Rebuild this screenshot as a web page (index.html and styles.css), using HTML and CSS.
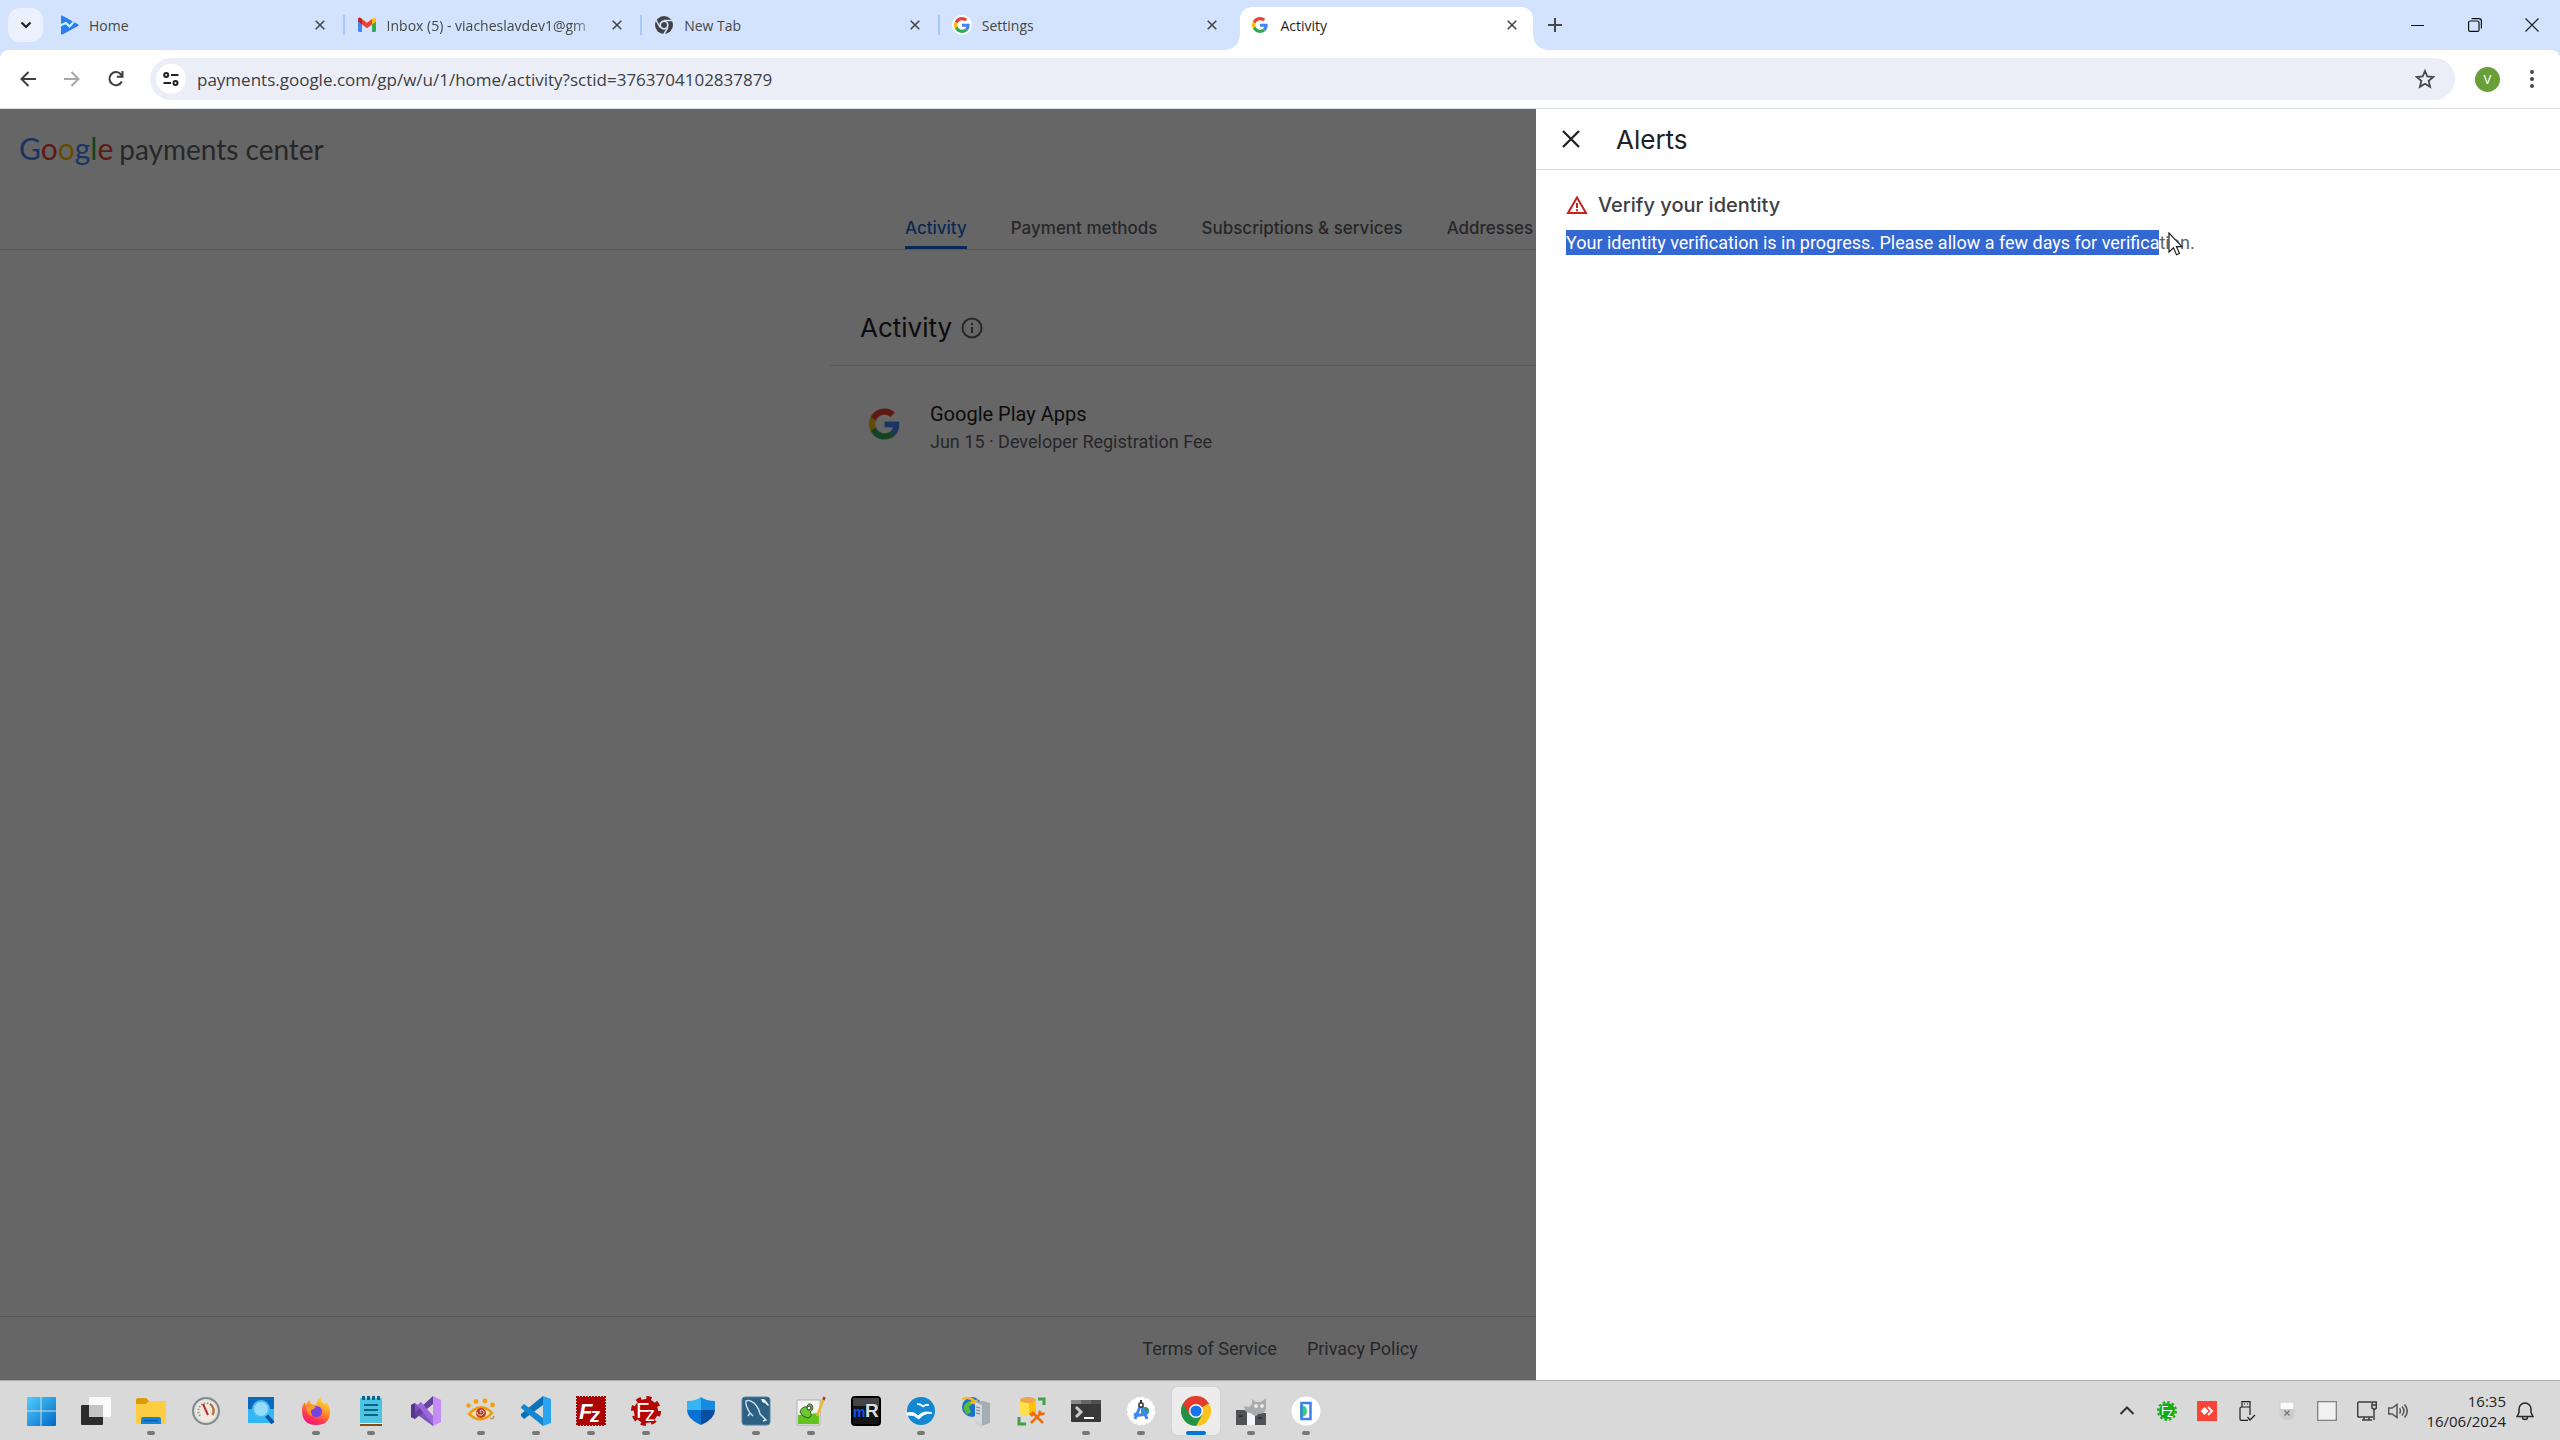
FILE: index.html
```html
<!DOCTYPE html>
<html lang="en">
<head>
    <meta charset="utf-8">
    <title>Activity</title>
    <link rel="stylesheet" href="styles.css">
</head>
<body>
    <!-- shared icons -->
    <svg class="sprite" aria-hidden="true">
        <symbol id="google" viewBox="0 0 48 48">
            <path fill="#ea4335" d="M24 9.500c3.540 0 6.710 1.220 9.210 3.600l6.850-6.850C35.900 2.380 30.470 0 24 0 14.620 0 6.510 5.380 2.560 13.220l7.980 6.190C12.430 13.720 17.740 9.500 24 9.500z"/>
            <path fill="#4285f4" d="M46.980 24.550c0-1.570-.15-3.090-.38-4.550H24v9.020h12.940c-.58 2.960-2.260 5.480-4.780 7.180l7.730 6c4.510-4.180 7.090-10.360 7.090-17.650z"/>
            <path fill="#fbbc05" d="M10.530 28.590c-.48-1.450-.76-2.990-.76-4.590s.27-3.140.76-4.590l-7.980-6.190C.92 16.460 0 20.120 0 24c0 3.880.92 7.540 2.560 10.780l7.970-6.190z"/>
            <path fill="#34a853" d="M24 48c6.480 0 11.930-2.130 15.890-5.810l-7.730-6c-2.150 1.450-4.920 2.300-8.160 2.300-6.260 0-11.570-4.220-13.470-9.910l-7.980 6.190C6.510 42.620 14.620 48 24 48z"/>
        </symbol>
        <symbol id="close" viewBox="0 0 10 10">
            <path d="M.7.7l8.600 8.600M9.300.7L.7 9.300" fill="none" stroke="currentColor" stroke-width="1.600"/>
        </symbol>
    </svg>

    <header class="tab-strip">
        <button class="tab-search" aria-label="Search tabs">
            <svg width="12" height="8" viewBox="0 0 12 8"><path d="M1.500 1.500L6 6l4.500-4.500" fill="none" stroke="#1f1f1f" stroke-width="2.200"/></svg>
        </button>
        <div class="tabs">
            <div class="tab">
                <svg class="favicon" viewBox="0 0 20 20"><path d="M2 1.500Q2 0 3.500.7L19 9.200q1.500.8 0 1.700L4 19.300Q2 20 2 18.500z" fill="#2b7df3"/><path d="M1 10.500l6-2.500 3.500 3.500L14.500 7" fill="none" stroke="#c8f7fb" stroke-width="2.200"/></svg>
                <a href="#">Home</a>
                <button aria-label="Close Home"><svg><use href="#close"/></svg></button>
            </div>
            <div class="tab">
                <svg class="favicon" viewBox="0 0 20 20"><path fill="#4285f4" d="M1 6l4 3v8H2.500Q1 17 1 15.500z"/><path fill="#34a853" d="M15 9l4-3v9.500q0 1.500-1.500 1.500H15z"/><path fill="#fbbc04" d="M15 4l1.500-1Q19 2 19 4.500V6.500L15 9.500z"/><path fill="#c5221f" d="M1 4.500q0-3 3-1.500l1 1v5.500L1 6.500z"/><path fill="#ea4335" d="M5 4l5 3.700L15 4v5.500l-5 3.700-5-3.700z"/></svg>
                <a href="#" class="fade">Inbox (5) - viacheslavdev1@gm</a>
                <button aria-label="Close Inbox"><svg><use href="#close"/></svg></button>
            </div>
            <div class="tab">
                <svg class="favicon" viewBox="0 0 20 20"><circle cx="10" cy="10" r="9" fill="#3f4347"/><path d="M10 5.500h8.500M6.100 12.300L2 5M13.900 12.300L9.700 19.500" stroke="#d3e3fd" stroke-width="1.500"/><circle cx="10" cy="10" r="3.800" fill="#3f4347" stroke="#d3e3fd" stroke-width="1.700"/></svg>
                <a href="#">New Tab</a>
                <button aria-label="Close New Tab"><svg><use href="#close"/></svg></button>
            </div>
            <div class="tab">
                <svg class="favicon" viewBox="0 0 20 20"><circle cx="10" cy="10" r="10" fill="#fff"/><use href="#google" x="2" y="2" width="16" height="16"/></svg>
                <a href="#">Settings</a>
                <button aria-label="Close Settings"><svg><use href="#close"/></svg></button>
            </div>
            <div class="tab active">
                <svg class="favicon" viewBox="0 0 20 20"><use href="#google" x="2" y="2" width="16" height="16"/></svg>
                <a href="#">Activity</a>
                <button aria-label="Close Activity"><svg><use href="#close"/></svg></button>
            </div>
        </div>
        <button class="new-tab" aria-label="New tab">
            <svg width="14" height="14" viewBox="0 0 14 14"><path d="M7 0v14M0 7h14" stroke="#474747" stroke-width="2"/></svg>
        </button>
        <div class="window-buttons">
            <button aria-label="Minimize"><svg width="14" height="14" viewBox="0 0 14 14"><path d="M0 7.500h13" stroke="#111"/></svg></button>
            <button aria-label="Restore"><svg width="14" height="14" viewBox="0 0 14 14" fill="none" stroke="#111" stroke-width="1.200"><rect x=".6" y="3" width="10.400" height="10.400" rx="1.500"/><path d="M3.500.6H11q2.400 0 2.400 2.400v7.500"/></svg></button>
            <button aria-label="Close window"><svg width="14" height="14" viewBox="0 0 14 14"><path d="M.5.5l13 13M13.500.5l-13 13" stroke="#222" stroke-width="1.200"/></svg></button>
        </div>
    </header>

    <div class="toolbar">
        <button class="tool" aria-label="Back"><svg width="16" height="16" viewBox="0 0 16 16"><path d="M16 8H1.500M8.500 1L1.500 8l7 7" fill="none" stroke="#3c3f42" stroke-width="2"/></svg></button>
        <button class="tool" aria-label="Forward" disabled><svg width="16" height="16" viewBox="0 0 16 16"><path d="M0 8h14.500M7.500 1l7 7-7 7" fill="none" stroke="#a5a6a8" stroke-width="2"/></svg></button>
        <button class="tool" aria-label="Reload"><svg width="16" height="16" viewBox="0 0 16 16"><path d="M13.800 10.500A6.500 6.500 0 1 1 13 3.500L14.500 5.500M14.500 0v5.800H8.800" fill="none" stroke="#3c3f42" stroke-width="2"/></svg></button>
        <div class="omnibox">
            <button class="site-info" aria-label="Site information">
                <svg width="16" height="14" viewBox="0 0 16 14" fill="none" stroke="#202124" stroke-width="2"><circle cx="3.200" cy="3" r="2"/><path d="M8 3h7.500M.5 11H8"/><circle cx="12.500" cy="11" r="2"/></svg>
            </button>
            <input type="text" aria-label="Address" value="payments.google.com/gp/w/u/1/home/activity?sctid=3763704102837879">
            <button class="star" aria-label="Bookmark this tab">
                <svg width="20" height="20" viewBox="0 0 20 20"><path d="M10 2l2.300 5.500 6 .5-4.600 3.900 1.400 5.900L10 14.700l-5.100 3.100 1.400-5.900L1.700 8l6-.5z" fill="none" stroke="#474747" stroke-width="1.800"/></svg>
            </button>
        </div>
        <button class="avatar" aria-label="Profile">V</button>
        <button class="menu" aria-label="Menu"><svg width="4" height="18" viewBox="0 0 4 18" fill="#474747"><circle cx="2" cy="2" r="2"/><circle cx="2" cy="9" r="2"/><circle cx="2" cy="16" r="2"/></svg></button>
    </div>

    <div class="viewport">
        <div class="page">
            <div class="brand">
                <span class="logo"><span class="blue">G</span><span class="red">o</span><span class="yellow">o</span><span class="blue">g</span><span class="green">l</span><span class="red">e</span></span>
                <span>payments center</span>
            </div>
            <nav class="page-nav">
                <div class="nav-inner">
                    <a href="#" class="current">Activity</a>
                    <a href="#">Payment methods</a>
                    <a href="#">Subscriptions &amp; services</a>
                    <a href="#">Addresses</a>
                </div>
            </nav>
            <main class="content">
                <h1>Activity
                    <svg width="22" height="22" viewBox="0 0 22 22" fill="none" stroke="#5f6368" stroke-width="2"><circle cx="11" cy="11" r="9.500"/><path d="M11 10v6M11 6v2"/></svg>
                </h1>
                <div class="entry">
                    <svg class="entry-icon"><use href="#google"/></svg>
                    <div>
                        <div class="entry-name">Google Play Apps</div>
                        <div class="entry-info">Jun 15 · Developer Registration Fee</div>
                    </div>
                </div>
            </main>
            <footer class="page-footer">
                <a href="#">Terms of Service</a>
                <a href="#">Privacy Policy</a>
            </footer>
        </div>
        <div class="scrim"></div>
        <aside class="drawer">
            <div class="drawer-header">
                <button aria-label="Close alerts"><svg width="18" height="18" viewBox="0 0 18 18"><path d="M1 1l16 16M17 1L1 17" stroke="#202124" stroke-width="2.300"/></svg></button>
                <h2>Alerts</h2>
            </div>
            <div class="alert">
                <h3>
                    <svg width="22" height="20" viewBox="0 0 22 20"><path d="M11 2.500L20 18H2z" fill="none" stroke="#c5221f" stroke-width="2"/><path d="M11 8v5M11 14.200v2" stroke="#c5221f" stroke-width="2"/></svg>
                    Verify your identity
                </h3>
                <p><mark>Your identity verification is in progress. Please allow a few days for verifica</mark><span class="rest">tion.<svg class="cursor" width="15" height="24" viewBox="0 0 15 24"><path d="M1 1v19l4.500-4.200 3 7 3-1.300-3-6.800H14z" fill="#fff" stroke="#222" stroke-width="1.200"/></svg></span></p>
            </div>
        </aside>
    </div>

    <footer class="taskbar">
        <div class="apps">
            <button aria-label="Start"><svg viewBox="0 0 30 30"><defs><linearGradient id="win" x2="1" y2="1"><stop stop-color="#4fd0ff"/><stop offset="1" stop-color="#0067c5"/></linearGradient></defs><path fill="url(#win)" d="M2 1h12.500v13.500H1V2q0-1 1-1zM15.500 1H29q1 0 1 1v12.500H15.500zM1 15.500h13.500V30H2q-1 0-1-1zM15.500 15.500H30V29q0 1-1 1H15.500z"/></svg></button>
            <button aria-label="Task view"><svg viewBox="0 0 30 30"><rect x="0" y="9" width="22" height="20" rx="1" fill="#2b2b2b"/><rect x="8" y="1" width="22" height="20" rx="1" fill="#fafafa"/><path d="M8 9h14v12H8z" fill="#c3c3c3"/></svg></button>
            <button aria-label="File Explorer" class="open"><svg viewBox="0 0 30 30"><path d="M0 4q0-2 2-2h8l3 3h16q1 0 1 1v8H0z" fill="#dd9b08"/><path d="M0 8h10l3-3h16q1 0 1 1v21q0 1-1 1H1q-1 0-1-1z" fill="#ffcd42"/><path d="M5 28v-5q0-2 2-2h16q2 0 2 2v5z" fill="#1583d8"/><path d="M8 24.500h14" stroke="#0b5ca6" stroke-width="1.500"/></svg></button>
            <button aria-label="Gauge"><svg viewBox="0 0 30 30"><circle cx="15" cy="15" r="13" fill="#dedbd5" stroke="#7f8b91" stroke-width="2"/><circle cx="15" cy="15" r="10.500" fill="#eeeae2"/><path d="M9 20a8 8 0 0 1 10-12" fill="none" stroke="#99958e" stroke-width="2" stroke-dasharray="1.500 1.500"/><path d="M19 8a8 8 0 0 1 2.500 11" fill="none" stroke="#b8733b" stroke-width="2.500"/><path d="M12 8l5 11" stroke="#c62a27" stroke-width="2"/></svg></button>
            <button aria-label="Search tool"><svg viewBox="0 0 30 30"><path d="M2 1h26v26H2z" fill="#33b6f5"/><path d="M2 1h26v12H2z" fill="#0969bd"/><path d="M20 19l7 8" stroke="#0756a4" stroke-width="4"/><circle cx="15" cy="13" r="8" fill="#93dcfa" stroke="#49baf0" stroke-width="2"/></svg></button>
            <button aria-label="Firefox" class="open"><svg viewBox="0 0 30 30"><defs><linearGradient id="fox" x1=".8" y1="0" x2=".3" y2="1"><stop stop-color="#ffe83b"/><stop offset=".45" stop-color="#ff9126"/><stop offset=".75" stop-color="#ff3850"/><stop offset="1" stop-color="#ed1282"/></linearGradient></defs><path fill="url(#fox)" d="M1 14q0-5 3-8l1 3 3-5 2 4 5 1q1-6 5-8l1 5 3 2 1-2q4 5 4 10 0 13-14 13T1 14z"/><circle cx="15.500" cy="15.500" r="5.500" fill="#7542e5"/><path d="M5 11q5-3 10 0-2 3-5 3-1 3 1 6-5-1-6-9z" fill="#ff9b2d"/></svg></button>
            <button aria-label="Notepad" class="open"><svg viewBox="0 0 30 30"><path d="M4 2h22v25H4z" fill="#4cc3df"/><path d="M8 9h14M8 14h14M8 19h14" stroke="#08628c" stroke-width="2"/><path d="M7.500 0v4M12.500 0v4M17.500 0v4M22.500 0v4" stroke="#08628c" stroke-width="3"/><path d="M4 27h22v1H4z" fill="#fff"/><path d="M4 28h22v2H4z" fill="#8a4a0b"/></svg></button>
            <button aria-label="Visual Studio"><svg viewBox="0 0 30 30"><path d="M0 9l4-2 18 16v7L4 17v6l-4-2z" fill="#7c52c0"/><path d="M0 9l4-2v16l-4-2z" fill="#54358f"/><path d="M4 23l5-4 13-11V0L9 12l-5 4z" fill="#66409f"/><path d="M6 9l4-3 13 15v9z" fill="#9b66da"/><path d="M22 0l8 4v22l-8 4z" fill="#c38cf4"/></svg></button>
            <button aria-label="Image viewer" class="open"><svg viewBox="0 0 30 30"><path d="M3 18q12-13 23-1-11 12-23 1z" fill="#f6ddb2" stroke="#ef9a0c" stroke-width="2.500"/><circle cx="15" cy="17" r="5" fill="#bc3b25"/><path d="M15 17q-2-3 1-3 4 2 0 5-5 1-5-3" fill="none" stroke="#f0d8c7"/><g fill="#f5a10e"><circle cx="2.500" cy="9.500" r="2.200"/><circle cx="10" cy="5.500" r="2.400"/><circle cx="19" cy="5" r="2.400"/><circle cx="26.500" cy="9" r="2.400"/></g><path d="M24 22q3 2 4-2" fill="none" stroke="#b99455" stroke-width="1.500"/></svg></button>
            <button aria-label="Visual Studio Code" class="open"><svg viewBox="0 0 30 30"><path d="M22 0v9L3 23l-3-3v-2z" fill="#0673b8"/><path d="M0 11l3-3 19 14v8L0 12z" fill="#1287cf"/><path d="M22 0l8 3v24l-8 3z" fill="#2ba4ef"/></svg></button>
            <button aria-label="FileZilla" class="open"><svg viewBox="0 0 30 30"><rect x="1" y="1" width="28" height="28" fill="#ac0404" stroke="#ac0404" stroke-width="2" stroke-dasharray="2 1"/><text x="3" y="23" class="fz">F</text><text x="14" y="26" class="fz small">z</text></svg></button>
            <button aria-label="FileZilla Server" class="open"><svg viewBox="0 0 30 30"><circle cx="15" cy="15" r="12" fill="#b50606"/><circle cx="15" cy="15" r="13" fill="none" stroke="#b50606" stroke-width="4" stroke-dasharray="5 5.210"/><text x="5" y="22" class="fz thin">F</text><text x="14" y="25" class="fz thin small">z</text></svg></button>
            <button aria-label="Windows Security"><svg viewBox="0 0 30 30"><path d="M15 1q5 4 14 4v9H15z" fill="#148be0"/><path d="M15 1Q10 5 1 5v9h14z" fill="#35b5f2"/><path d="M1 14h14v15Q1 23 1 14z" fill="#0772d3"/><path d="M29 14H15v15q14-6 14-15z" fill="#0a4f9f"/></svg></button>
            <button aria-label="MySQL Workbench" class="open"><svg viewBox="0 0 30 30"><rect x="1" y="1" width="28" height="28" rx="3" fill="#2d6183" stroke="#58829b"/><path d="M7 20l2-3 3 3M9 17Q4 9 5 5q3-2 8 2 5 5 6 11l6 6-3 1" fill="none" stroke="#d5e3ec" stroke-width="1.400"/><path d="M20 3q1 4 4 4l3 3 1-1-3-4-2-2" fill="#edf4f8"/></svg></button>
            <button aria-label="Notepad++" class="open"><svg viewBox="0 0 30 30"><path d="M1 4h23v25H1z" fill="#f4f4f2" stroke="#999" stroke-width=".700"/><path d="M2 19l21-2v11L2 28z" fill="#63c31f"/><path d="M4 16q2-6 7-5 1-5 5-2 2 5-2 7 3 4-2 6-6-1-8-6z" fill="#69cb32" stroke="#315824"/><circle cx="13" cy="12" r="2" fill="#fff" stroke="#333"/><path d="M28 2l-7 18" stroke="#efb52b" stroke-width="2.500"/><path d="M28.500 1l-1 3" stroke="#a23f3a" stroke-width="2.500"/></svg></button>
            <button aria-label="mRemote"><svg viewBox="0 0 30 30"><rect x="1" y="1" width="28" height="28" rx="3" fill="#141414" stroke="#000" stroke-width="2"/><path d="M2 2h26v8H2z" fill="#444"/><text x="2" y="21" class="m">m</text><text x="14" y="21" class="r">R</text></svg></button>
            <button aria-label="OpenOffice" class="open"><svg viewBox="0 0 30 30"><circle cx="15" cy="15" r="14" fill="#1188d1"/><path d="M11 8q4-1 6 2 3-3 6-1-4 0-6 2-2-2-6-3zM1 17q7-2 11 3 6-6 14-3-9 0-13 6-5-5-12-4z" fill="#fff" stroke="#fff"/></svg></button>
            <button aria-label="IIS Manager"><svg viewBox="0 0 30 30"><circle cx="11" cy="11" r="10" fill="#1a70ce"/><path d="M4 8q5-5 8-1l-4 4 2 5-4 3q-5-6-2-11z" fill="#55bd36"/><path d="M1 2q9-3 13 2l3-1-1 6-8-2 3-2Q8 2 1 4z" fill="#f4b625"/><path d="M14 6l8-1 7 2v20l-9 3-6-5z" fill="#a5adb2"/><path d="M14 6l7 3v21l-7-5z" fill="#d2d8db"/><path d="M15 11l4 1M15 14l4 1M15 17l4 1" stroke="#747f86"/></svg></button>
            <button aria-label="Database tools"><svg viewBox="0 0 30 30"><path d="M4 4h16v14q-8 3-16 0z" fill="#ffe04a"/><path d="M13 6h7v12q-3 1-7 1z" fill="#ffc400"/><ellipse cx="12" cy="4" rx="8" ry="3" fill="#eca448"/><path d="M22 3h6v6M3 21v7h7" fill="none" stroke="#43a047" stroke-width="3"/><path d="M15 27l9-9M17 17l10 10" stroke="#ef6c0a" stroke-width="2.500"/><path d="M13 18l4-3 2 2-3 4zM23 14l4 3 2-1q0 5-5 3l-2-2z" fill="#ef6c0a"/></svg></button>
            <button aria-label="Terminal" class="open"><svg viewBox="0 0 30 30"><rect y="4" width="30" height="22" rx="1" fill="#383838"/><path d="M0 4h10v4H0z" fill="#888"/><path d="M10 4h10v4H10z" fill="#666"/><path d="M20 4h10v4H20z" fill="#505050"/><path d="M5 11l5 5-5 5" fill="none" stroke="#ccc" stroke-width="3"/><path d="M13 22h10" stroke="#fff" stroke-width="2"/></svg></button>
            <button aria-label="Android Studio" class="open"><svg viewBox="0 0 30 30"><circle cx="15" cy="15" r="13" fill="#fff" stroke="#fff" stroke-width="2.500" stroke-dasharray="4 1"/><circle cx="19" cy="15" r="4" fill="#2c9b5c"/><path d="M15 8L9 23M15 8l6 15M8 18q7 3 14-2" fill="none" stroke="#4285f4" stroke-width="3"/><rect x="13" y="7" width="4" height="4" rx="1" fill="#fff" stroke="#303134" stroke-width="1.500"/><path d="M15 4v3" stroke="#303134" stroke-width="2"/></svg></button>
            <button aria-label="Chrome" class="open focused"><svg viewBox="0 0 30 30"><path d="M15 15L2 7.500A15 15 0 0 1 28 7.500z" fill="#e33b2e"/><path d="M15 15L28 7.500A15 15 0 0 1 15 30l-2-4z" fill="#fcc31e"/><path d="M15 15L2 7.500A15 15 0 0 0 15 30l6.500-11.500z" fill="#229342"/><path d="M15 8h13.300l-.3-.5H2l6.500 11z" fill="#e33b2e"/><circle cx="15" cy="15" r="7" fill="#fff"/><circle cx="15" cy="15" r="5.600" fill="#1a73e8"/></svg></button>
            <button aria-label="Cat app" class="open"><svg viewBox="0 0 30 30"><path d="M0 14h11v15H0zM19 17h11v12H19z" fill="#505355"/><path d="M11 17h8v12h-8z" fill="#f3f5fa"/><path d="M8 10l5 1 3-3V3l4 3h5l5-4v11q-1 5-8 5-2 4-6 0l-7-3z" fill="#a9abac"/><circle cx="20" cy="10" r="2" fill="#e8e8e8"/><circle cx="26" cy="10" r="2" fill="#e8e8e8"/><path d="M3 20h4M22 22h4" stroke="#303436" stroke-width="2"/></svg></button>
            <button aria-label="Emulator" class="open"><svg viewBox="0 0 30 30"><circle cx="15" cy="15" r="14.500" fill="#fff"/><path d="M9 9q7 0 7 6t-7 6z" fill="#35cf7e"/><rect x="10.500" y="7" width="9" height="16" fill="none" stroke="#3e7fea" stroke-width="2.500"/></svg></button>
        </div>
        <div class="tray">
            <button aria-label="Show hidden icons"><svg viewBox="0 0 20 20"><path d="M3.500 13L10 6.500l6.500 6.500" fill="none" stroke="#333" stroke-width="2"/></svg></button>
            <button aria-label="FileZilla Server status"><svg viewBox="0 0 20 20"><circle cx="10" cy="10" r="8" fill="#11ad13"/><circle cx="10" cy="10" r="9" fill="none" stroke="#11ad13" stroke-width="2" stroke-dasharray="2.500 2.210"/><text x="4" y="14" class="fz tiny">F</text><text x="10" y="16" class="fz tiny">z</text></svg></button>
            <button aria-label="AnyDesk"><svg viewBox="0 0 20 20"><path d="M0 0h20v20H0z" fill="#fc4337"/><path d="M3.500 10l4-4 4 4-4 4z" fill="#fff"/><path d="M11 6l4 4-4 4" fill="none" stroke="#fff" stroke-width="1.800"/></svg></button>
            <button aria-label="Safely remove hardware"><svg viewBox="0 0 20 20" fill="none" stroke="#1e1e1e" stroke-width="1.200"><path d="M5 6V.6h8V6M13 14V7q0-1-1-1H5Q3 6 3 7.500V18q0 1.400 1.500 1.400H11M7 3h1M10 3h1M10.500 16l2.500 3 5-5"/></svg></button>
            <button aria-label="Mouse"><svg viewBox="0 0 20 20"><path d="M3 1h14v10q0 8-7 8t-7-8z" fill="#f9f9f9" stroke="#ccc"/><path d="M3 8h14v3q0 8-7 8t-7-8z" fill="#ccc"/><path d="M7.500 9.500l5 5M12.500 9.500l-5 5" stroke="#777" stroke-width="1.300"/></svg></button>
            <button aria-label="Blank status"><svg viewBox="0 0 20 20"><path d="M.7.7h18.600v18.600H.7z" fill="#f1f1f1" stroke="#818181" stroke-width="1.300"/></svg></button>
            <button aria-label="Network"><svg viewBox="0 0 20 20" fill="none" stroke="#3e3e3e" stroke-width="1.500"><path d="M14 1H2Q.7 1 .7 2.500v12Q.7 16 2 16h14M5 19h10M7 16v3M12 16v3"/><path d="M15 1h4.300v6L17.500 8.500 15 7zM17 8v11M15 4h4"/></svg></button>
            <button aria-label="Volume" class="volume"><svg viewBox="0 0 20 20" fill="none" stroke="#555" stroke-width="1.500"><path d="M.7 7h3.500L9 3.500v13L4.200 13H.7zM11.500 7.500q2 2.500 0 5M14 5.500q4 4.500 0 9M16.500 3.500q5.500 6.500 0 13"/></svg></button>
            <div class="clock"><time>16:35</time><time>16/06/2024</time></div>
            <button aria-label="Notifications" class="bell"><svg viewBox="0 0 20 20" fill="none" stroke="#292929" stroke-width="1.500"><path d="M2 15.500l2-4V8a6 6 0 0 1 12 0v3.500l2 4zM7.500 16q0 2.500 2.500 2.500t2.500-2.500"/></svg></button>
        </div>
    </footer>
</body>
</html>
```

FILE: styles.css
```css
* {
    box-sizing: border-box;
}

body {
    margin: 0;
    height: 100vh;
    display: flex;
    flex-direction: column;
    background-color: #fff;
    font-family: Roboto, sans-serif;
    overflow: hidden;
}

button {
    padding: 0;
    border: 0;
    background: none;
    display: flex;
    align-items: center;
    justify-content: center;
    flex-shrink: 0;
    cursor: pointer;
}

a {
    color: inherit;
    text-decoration: none;
}

svg {
    flex-shrink: 0;
}

.sprite {
    position: absolute;
    width: 0;
    height: 0;
}

/* browser tabs */
.tab-strip {
    height: 50px;
    flex-shrink: 0;
    display: flex;
    align-items: center;
    padding-left: 8px;
    background-color: #d3e3fd;
    font-family: "Open Sans", sans-serif;
    font-size: 14px;
    color: #444746;
}

.tab-search {
    width: 35px;
    height: 34px;
    border-radius: 12px;
    background-color: #ebf1fe;
}

.tabs {
    flex: 0 1 1488px;
    align-self: stretch;
    display: grid;
    grid-template-columns: repeat(5, 1fr);
    margin-left: 4px;
}

.tab {
    position: relative;
    display: flex;
    align-items: center;
    min-width: 0;
    padding: 0 20px 0 12px;
}

.tab a {
    flex: 1;
    min-width: 0;
    margin: 0 14px 0 10px;
    overflow: hidden;
    white-space: nowrap;
}

.tab .fade {
    -webkit-mask-image: linear-gradient(to right, #000 88%, transparent);
    mask-image: linear-gradient(to right, #000 88%, transparent);
}

.tab button svg {
    width: 10px;
    height: 10px;
    color: #444746;
}

.tab:nth-child(-n+3)::after {
    content: "";
    position: absolute;
    right: 0;
    top: 15px;
    width: 2px;
    height: 20px;
    background-color: #a8c7fa;
}

.favicon {
    width: 20px;
    height: 20px;
}

.tab.active {
    margin: 7px 2px 0 3px;
    padding: 0 16px 7px 10px;
    border-radius: 12px 12px 0 0;
    background-color: #fff;
    color: #1f1f1f;
}

/* curved feet of the active tab */
.tab.active::before,
.tab.active::after {
    content: "";
    position: absolute;
    bottom: 0;
    width: 14px;
    height: 14px;
}

.tab.active::before {
    right: 100%;
    background: radial-gradient(circle at 0 0, transparent 13px, #fff 14px);
}

.tab.active::after {
    left: 100%;
    background: radial-gradient(circle at 100% 0, transparent 13px, #fff 14px);
}

.new-tab {
    width: 40px;
    height: 34px;
}

.window-buttons {
    display: flex;
    margin-left: auto;
}

.window-buttons button {
    width: 57px;
    height: 50px;
}

/* address bar */
.toolbar {
    height: 59px;
    flex-shrink: 0;
    display: flex;
    align-items: center;
    padding: 0 22px 0 6px;
    border-bottom: 1px solid #dadce0;
    background: radial-gradient(circle at 10px 10px, #fff 10px, #d3e3fd 11px) left top / 10px 10px no-repeat,
        radial-gradient(circle at 0 10px, #fff 10px, #d3e3fd 11px) right top / 10px 10px no-repeat, #fff;
}

.tool {
    width: 44px;
    height: 42px;
}

.omnibox {
    flex: 1;
    height: 42px;
    display: flex;
    align-items: center;
    margin-left: 12px;
    padding: 0 20px 0 6px;
    border-radius: 21px;
    background-color: #ebeef7;
}

.site-info {
    width: 30px;
    height: 30px;
    border-radius: 50%;
    background-color: #fff;
}

.omnibox input {
    flex: 1;
    padding: 0 0 0 11px;
    border: 0;
    outline: 0;
    background: none;
    font-family: "Open Sans", sans-serif;
    font-size: 17px;
    color: #3c4043;
}

.avatar {
    width: 25px;
    height: 25px;
    margin: 0 26px 0 20px;
    border-radius: 50%;
    background-color: #689f38;
    color: #fff;
    font-family: Roboto, sans-serif;
    font-size: 13px;
}

.menu {
    width: 12px;
    height: 30px;
}

/* payments page */
.viewport {
    flex: 1;
    min-height: 0;
    position: relative;
    overflow: hidden;
}

.page {
    height: 100%;
    display: flex;
    flex-direction: column;
}

.brand {
    display: flex;
    align-items: baseline;
    gap: 6px;
    height: 80px;
    padding: 21px 0 0 19px;
    font-family: Lato, sans-serif;
    font-size: 28px;
    color: #5f6368;
}

.logo {
    font-size: 30px;
}

.blue {
    color: #4285f4;
}

.red {
    color: #ea4335;
}

.yellow {
    color: #fbbc05;
}

.green {
    color: #34a853;
}

.page-nav {
    height: 61px;
    border-bottom: 1px solid #dadce0;
}

.nav-inner {
    width: 900px;
    max-width: 100%;
    height: 100%;
    display: flex;
    gap: 44px;
    margin: 0 auto;
    padding: 21px 0 0 75px;
    font-family: Inter, sans-serif;
    font-size: 17px;
    font-weight: 500;
    color: #5f6368;
}

.nav-inner a {
    display: flex;
    align-items: center;
    border-bottom: 3px solid transparent;
    white-space: nowrap;
}

.nav-inner .current {
    color: #1967d2;
    border-color: #1967d2;
}

.content {
    flex: 1;
    width: 900px;
    max-width: 100%;
    margin: 0 auto;
}

.content h1 {
    display: flex;
    align-items: center;
    gap: 9px;
    height: 116px;
    margin: 0;
    padding: 40px 30px 0;
    border-bottom: 1px solid #dadce0;
    font-family: Inter, sans-serif;
    font-size: 26px;
    font-weight: 400;
    color: #202124;
}

.entry {
    display: flex;
    align-items: flex-start;
    gap: 30px;
    padding: 33px 39px;
}

.entry-icon {
    width: 31px;
    height: 50px;
}

.entry-name {
    font-size: 20px;
    line-height: 30px;
    color: #202124;
}

.entry-info {
    font-size: 18px;
    line-height: 26px;
    color: #5f6368;
}

.page-footer {
    height: 64px;
    display: flex;
    align-items: center;
    justify-content: center;
    gap: 30px;
    border-top: 1px solid #dadce0;
    font-size: 18px;
    color: #5f6368;
}

.scrim {
    position: absolute;
    inset: 0;
    background-color: rgba(0, 0, 0, 0.6);
}

/* alerts drawer */
.drawer {
    position: absolute;
    top: 0;
    right: 0;
    bottom: 0;
    width: 40%;
    background-color: #fff;
}

.drawer-header {
    display: flex;
    align-items: center;
    gap: 36px;
    height: 61px;
    padding-left: 26px;
    border-bottom: 1px solid #dadce0;
}

.drawer h2 {
    margin: 0;
    font-family: Inter, sans-serif;
    font-size: 26px;
    font-weight: 400;
    color: #202124;
}

.alert {
    padding: 20px 30px;
}

.alert h3 {
    display: flex;
    align-items: center;
    gap: 10px;
    height: 30px;
    margin: 0 0 10px;
    font-family: Inter, sans-serif;
    font-size: 20px;
    font-weight: 500;
    color: #3c4043;
}

.alert p {
    margin: 0;
    font-size: 18px;
    line-height: 25px;
    color: #5f6368;
}

.alert mark {
    display: inline-block;
    background-color: #3367d1;
    color: #fff;
}

.rest {
    position: relative;
}

.cursor {
    position: absolute;
    left: 9px;
    top: 0;
}

/* taskbar */
.taskbar {
    height: 60px;
    flex-shrink: 0;
    display: flex;
    align-items: center;
    justify-content: space-between;
    padding: 0 24px 0 17px;
    border-top: 1px solid #aaa;
    background-color: #d9d9d9;
}

.apps {
    display: flex;
    gap: 7px;
}

.apps button {
    position: relative;
    width: 48px;
    height: 48px;
    border-radius: 5px;
}

.apps svg {
    width: 30px;
    height: 30px;
}

.apps .open::after {
    content: "";
    position: absolute;
    bottom: 0;
    width: 8px;
    height: 4px;
    border-radius: 2px;
    background-color: #777;
}

.apps .focused {
    background-color: #ececec;
    box-shadow: 0 0 1px #aaa;
}

.apps .focused::after {
    width: 20px;
    background-color: #0078d4;
}

.fz {
    font: italic bold 22px "Liberation Sans", sans-serif;
    fill: #fff;
}

.fz.small {
    font-size: 20px;
}

.fz.thin {
    font-style: normal;
    font-weight: 400;
}

.fz.tiny {
    font-size: 12px;
    font-style: normal;
    font-weight: 400;
}

.m {
    font: bold 14px "Liberation Sans", sans-serif;
    fill: #1450f5;
}

.r {
    font: bold 19px "Liberation Sans", sans-serif;
    fill: #ddd;
}

.tray {
    display: flex;
    align-items: center;
}

.tray button {
    width: 40px;
    height: 48px;
}

.tray svg {
    width: 20px;
    height: 20px;
}

.tray .volume {
    width: 22px;
}

.tray .bell {
    width: 22px;
}

.clock {
    display: flex;
    flex-direction: column;
    align-items: flex-end;
    margin: 0 8px 0 17px;
    font-family: "Open Sans", sans-serif;
    font-size: 15px;
    line-height: 20px;
    color: #222;
}
```
